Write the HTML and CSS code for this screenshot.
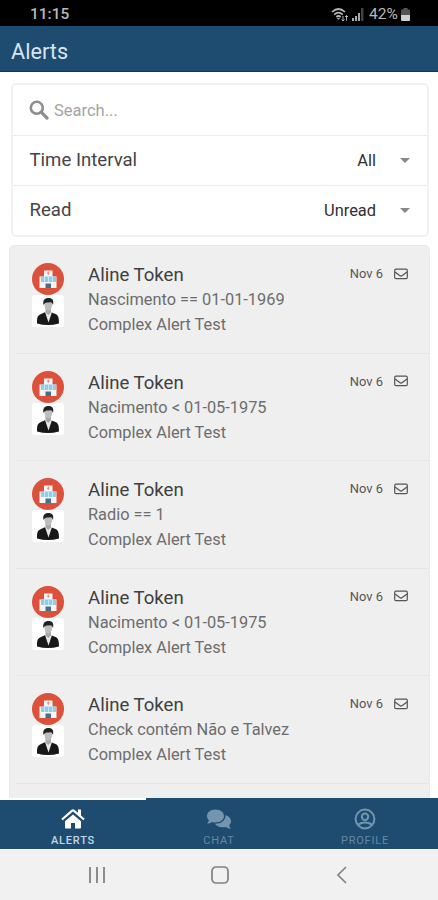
FILE: index.html
```html
<!DOCTYPE html>
<html lang="en">
<head>
<meta charset="utf-8">
<title>Alerts</title>
<link rel="stylesheet" href="styles.css">
</head>
<body>
<svg class="defs" width="0" height="0" aria-hidden="true">
  <symbol id="hospital" viewBox="0 0 32 32">
    <circle cx="16" cy="16" r="16" fill="#dc513b"/>
    <path d="M7.500 13.500h4.500V7.500h8.500v6h4V25h-17z" fill="#f7f6f6"/>
    <path d="M9 13.500h15v5.500H9z" fill="#8fcdea"/>
    <path d="M12.500 13.500V19M16.500 13.500V19M20.500 13.500V19" stroke="#d5edf7" stroke-width=".8"/>
    <path d="M13.500 20.500h5.500V25h-5.500z" fill="#456f91"/>
    <path d="M16.300 8.500v3.400M15 10.200h2.600" stroke="#e78678" stroke-width="1"/>
  </symbol>
  <symbol id="person" viewBox="0 0 32 32">
    <rect width="32" height="32" rx="3" fill="#fff"/>
    <path d="M5 28.500c0-5 0-8 4-9.500l4.500-2h5l5 2c3 1 3.500 4.500 3.500 9.500q-11 3-22 0z" fill="#17181a"/>
    <path d="M13 17l3.500 10.500L20 17z" fill="#e9e9e9"/>
    <path d="M13.500 12.500h5.500v5l-2.700 2.500-2.800-2.500z" fill="#a7a7a7"/>
    <ellipse cx="16.300" cy="10" rx="3.800" ry="5.500" fill="#bdbdbd"/>
    <path d="M11.500 10C10.500 5.500 12.500 3 16.500 3S22 5.500 21 10c-1-2.500-2-3-4-2.500-2 0-4-.5-5.500 2.500z" fill="#222"/>
  </symbol>
  <symbol id="mail" viewBox="0 0 14 12">
    <rect x=".7" y="1.200" width="12.600" height="9.400" rx="1.200" fill="none" stroke="#555" stroke-width="1.200"/>
    <path d="M1 4l4.700 3.600q1.300 1 2.600 0L13 4" fill="none" stroke="#555" stroke-width="1.200"/>
  </symbol>
</svg>
<div class="screen">
  <div class="status">
    <span class="clock">11:15</span>
    <svg class="wifi" viewBox="0 0 18 15" width="18" height="15" fill="none" stroke="#b5b5b5" stroke-width="1.700">
      <path d="M1 5q6.500-6 13 0M3.200 7.600q4.300-4 8.600 0M5.300 10q2.200-2 4.400 0"/>
      <path d="M6 11h3l-1.500 2z" fill="#b5b5b5" stroke="none"/>
      <path d="M12 9v5M10.500 12.500l1.500 1.500 1.500-1.500M15.500 13.500v-5M14 10l1.500-1.500L17 10" stroke-width="1"/>
    </svg>
    <svg class="signal" viewBox="0 0 12 13" width="12" height="13">
      <path d="M0 10h2v3H0zM3 8h2v5H3zM6 5h2v8H6z" fill="#aaa"/><path d="M9 0h2.500v13H9z" fill="#424242"/>
    </svg>
    <span class="percent">42%</span>
    <svg class="battery" viewBox="0 0 9 13" width="9" height="13">
      <path d="M2.500 0h4v1.500H8q1 0 1 1V8H0V2.500q0-1 1-1h1.500z" fill="#555"/><path d="M0 7h9v5q0 1-1 1H1q-1 0-1-1z" fill="#d0d0d0"/>
    </svg>
  </div>
  <header class="header"><h1>Alerts</h1></header>
  <main class="content">
    <section class="filters">
      <div class="search">
        <svg viewBox="0 0 20 20" width="20" height="20" fill="none" stroke="#8e8e8e"><circle cx="7.800" cy="7.800" r="6" stroke-width="2.600"/><path d="M12.200 12.200L18 18" stroke-width="3.200" stroke-linecap="round"/></svg>
        <span>Search...</span>
      </div>
      <div class="filter"><span class="label">Time Interval</span><span class="value">All</span><i class="caret"></i></div>
      <div class="filter"><span class="label">Read</span><span class="value">Unread</span><i class="caret"></i></div>
    </section>
    <section class="list">
      <article class="alert">
        <div class="avatars"><svg><use href="#hospital"/></svg><svg><use href="#person"/></svg></div>
        <div class="text"><h2>Aline Token</h2><p>Nascimento == 01-01-1969</p><p>Complex Alert Test</p></div>
        <div class="meta"><span>Nov 6</span><svg><use href="#mail"/></svg></div>
      </article>
      <article class="alert">
        <div class="avatars"><svg><use href="#hospital"/></svg><svg><use href="#person"/></svg></div>
        <div class="text"><h2>Aline Token</h2><p>Nacimento &lt; 01-05-1975</p><p>Complex Alert Test</p></div>
        <div class="meta"><span>Nov 6</span><svg><use href="#mail"/></svg></div>
      </article>
      <article class="alert">
        <div class="avatars"><svg><use href="#hospital"/></svg><svg><use href="#person"/></svg></div>
        <div class="text"><h2>Aline Token</h2><p>Radio == 1</p><p>Complex Alert Test</p></div>
        <div class="meta"><span>Nov 6</span><svg><use href="#mail"/></svg></div>
      </article>
      <article class="alert">
        <div class="avatars"><svg><use href="#hospital"/></svg><svg><use href="#person"/></svg></div>
        <div class="text"><h2>Aline Token</h2><p>Nacimento &lt; 01-05-1975</p><p>Complex Alert Test</p></div>
        <div class="meta"><span>Nov 6</span><svg><use href="#mail"/></svg></div>
      </article>
      <article class="alert">
        <div class="avatars"><svg><use href="#hospital"/></svg><svg><use href="#person"/></svg></div>
        <div class="text"><h2>Aline Token</h2><p>Check contém Não e Talvez</p><p>Complex Alert Test</p></div>
        <div class="meta"><span>Nov 6</span><svg><use href="#mail"/></svg></div>
      </article>
    </section>
  </main>
  <nav class="tabs">
    <a class="tab active">
      <svg viewBox="0 0 24 22" width="24" height="22" fill="#fff"><path d="M12 6.600L20 13.300v6.500q0 .7-.7.7H14V15h-4v5.500H4.700q-.7 0-.7-.7v-6.500z"/><path d="M1 11.500L11.200 2.700q.8-.6 1.600 0L23 11.500" fill="none" stroke="#fff" stroke-width="2.200"/><path d="M17 1.500h3V9l-3-2.500z"/></svg>
      <span>ALERTS</span>
    </a>
    <a class="tab">
      <svg viewBox="0 0 26 22" width="26" height="22" fill="#7395ae"><path d="M9.500 1.500c5 0 8.500 2.900 8.500 6.500s-3.500 6.500-8.500 6.500c-1.300 0-2.500-.2-3.600-.6C4.500 15 2.800 15.600 1 15.600c1-1 1.700-2.300 1.900-3.400C1.700 11 1 9.600 1 8c0-3.600 3.500-6.500 8.500-6.500z"/><path d="M19.500 7.300c3.200.8 5.500 3 5.500 5.900 0 1.500-.7 2.900-1.900 4 .2 1.200.9 2.400 1.900 3.400-1.800 0-3.500-.6-4.900-1.700-5 1.300-9.400-.2-11.200-3.100 5.800.2 10.900-3 10.600-8.500z"/></svg>
      <span>CHAT</span>
    </a>
    <a class="tab">
      <svg viewBox="0 0 22 22" width="22" height="22" fill="none" stroke="#7395ae" stroke-width="2"><circle cx="11" cy="11" r="9.400"/><circle cx="11" cy="8.800" r="3.200"/><path d="M4.300 16.600Q7 14.400 11 14.400t6.700 2.200"/></svg>
      <span>PROFILE</span>
    </a>
  </nav>
  <div class="system">
    <svg viewBox="0 0 18 18" width="18" height="18" stroke="#828282" stroke-width="1.800"><path d="M2 1v16M9 1v16M16 1v16"/></svg>
    <svg viewBox="0 0 18 18" width="18" height="18" fill="none" stroke="#828282" stroke-width="1.700"><rect x="1" y="1" width="16" height="16" rx="4"/></svg>
    <svg viewBox="0 0 18 18" width="18" height="18" fill="none" stroke="#828282" stroke-width="1.700"><path d="M13 1L5 9l8 8"/></svg>
  </div>
</div>
</body>
</html>
```
FILE: styles.css
```css
* { box-sizing: border-box; }
body { margin: 0; font-family: Roboto, "Liberation Sans", sans-serif; background: #fff; }
h1, h2, p { margin: 0; font-weight: 400; }
svg { display: block; flex: none; }
.defs { position: absolute; }
.screen { width: 438px; height: 900px; display: flex; flex-direction: column; overflow: hidden; }

.status { height: 26px; flex: none; background: #000; color: #b8b8b8; display: flex; align-items: center; padding: 2px 28px 0 30px; }
.clock { font-size: 15.500px; font-weight: 500; flex: 1; }
.signal { margin-left: 3px; }
.percent { font-size: 15.500px; width: 30px; margin: 0 2px 0 5px; }

.header { height: 46px; flex: none; background: #1e4c70; border-bottom: 1px solid #123550; padding: 0 11px; display: flex; align-items: center; }
.header h1 { font-size: 21.700px; line-height: 26px; color: #d7e5ee; padding-top: 6px; }

.content { flex: 1; min-height: 0; padding: 11px 8px 0 9px; overflow: hidden; }
.filters { height: 154px; margin: 0 1px 8px 2px; border: 2px solid #f1f2f2; border-radius: 5px; background: #fff; }
.search { height: 50px; padding: 0 16px; display: flex; align-items: center; gap: 5px; color: #a4a4a4; font-size: 16.500px; }
.filter { height: 50px; border-top: 1px solid #ececec; padding: 0 17px 1px 16.500px; display: flex; align-items: center; color: #444; font-size: 18.600px; }
.label { flex: 1; }
.value { font-size: 16.400px; color: #303030; margin-right: 24px; }
.caret { border: 5px solid transparent; border-top-color: #888; border-bottom: 0; }

.list { background: #efefef; border: 1px solid #eaeaea; border-radius: 5px 5px 0 0; height: 560px; }
.alert { height: 107.600px; margin-left: 6px; padding: 16px 21px 0 16px; display: flex; border-bottom: 1px solid #e6e6e6; }
.avatars { width: 32px; margin-right: 24px; padding-top: 1px; }
.avatars svg { width: 32px; height: 32px; }
.text { flex: 1; white-space: nowrap; }
.text h2 { font-size: 18.600px; line-height: 24px; padding-top: 1px; color: #404040; }
.text p { font-size: 16.350px; line-height: 25px; color: #6d6d6d; }
.meta { display: flex; height: 23px; align-items: center; gap: 11px; font-size: 12.900px; color: #555; }
.meta svg { width: 14px; height: 12px; }

.tabs { height: 51px; flex: none; background: #1e4c70; display: flex; }
.tab { flex: 1; padding-top: 9px; border-top: 1px solid #1e4c70; display: flex; flex-direction: column; align-items: center; color: #6488a2; font-size: 11px; line-height: 15px; letter-spacing: .8px; }
.tab.active { border-top: 2px solid #fff; padding-top: 8px; color: #c3d6e3; font-weight: 500; }
.tab svg { margin-bottom: 3px; }

.system { height: 51px; flex: none; background: #f1f1f1; border-top: 1px solid #f9f9f9; display: flex; align-items: center; justify-content: space-between; padding: 0 87px 0 88px; }
```
